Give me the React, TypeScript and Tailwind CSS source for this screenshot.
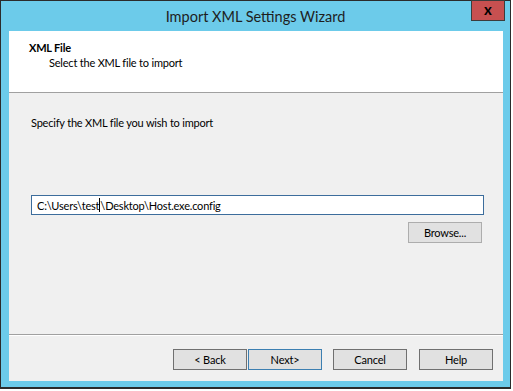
import React from 'react';

const font = { fontFamily: 'Lato, "Noto Sans", sans-serif' };

const WizardButton = ({ label, focused = false }: { label: string; focused?: boolean }) => (
	<button
		className={`w-[74px] h-[21px] bg-[#e1e1e1] border text-[11px] tracking-[-0.2px] leading-none text-black flex items-center justify-center ${
			focused ? 'border-[#3c7fb1]' : 'border-[#707070]'
		}`}
	>
		{label}
	</button>
);

export default function App() {
	return (
		<div className="w-[513px] h-[391px] bg-white overflow-hidden" style={font}>
			<div className="relative w-[511px] h-[389px] border border-b-2 border-[#2b2b2b] bg-[#6ccbea] flex flex-col">
				{/* title bar */}
				<div className="h-[30px] flex items-center justify-center text-[14.5px] text-[#1e1e1e] pt-[1px]">
					Import XML Settings Wizard
				</div>
				<div className="absolute top-[-1px] right-[5px] w-[34px] h-[21px] bg-[#c75050] border border-[#3c3c3c] flex items-center justify-center">
					<span className="text-[15px] font-bold leading-none text-black -mt-[3px]">x</span>
				</div>

				{/* client area */}
				<div className="ml-[8px] w-[494px] h-[350px] bg-[#f0f0f0] flex flex-col text-[11px] tracking-[-0.2px] text-black">
					<div className="h-[62px] bg-white border-b border-[#a0a0a0] pt-[9px] pl-[20px] leading-[15px]">
						<div className="font-bold">XML File</div>
						<div className="pl-[20px]">Select the XML file to import</div>
					</div>

					<div className="h-[241px] pt-[22px] pl-[22px]">
						<div className="leading-[16px]">Specify the XML file you wish to import</div>
						<div className="mt-[64px] w-[453px] h-[20px] bg-white border border-[#3c6d9c] flex items-center pl-[5px] leading-none">
							C:\Users\test
							<span className="inline-block w-px h-[14px] bg-black" />
							\Desktop\Host.exe.config
						</div>
						<div className="flex justify-end w-[451px] mt-[7px]">
							<button className="w-[74px] h-[21px] bg-[#e1e1e1] border border-[#adadad] leading-none">
								Browse...
							</button>
						</div>
					</div>

					<div className="border-t border-[#a0a0a0] border-b border-b-white" />

					<div className="flex justify-end pt-[13px] pr-[10px]">
						<WizardButton label="< Back" />
						<div className="w-px" />
						<WizardButton label="Next>" focused />
						<div className="w-[11px]" />
						<WizardButton label="Cancel" />
						<div className="w-[12px]" />
						<WizardButton label="Help" />
					</div>
				</div>
			</div>
		</div>
	);
}
